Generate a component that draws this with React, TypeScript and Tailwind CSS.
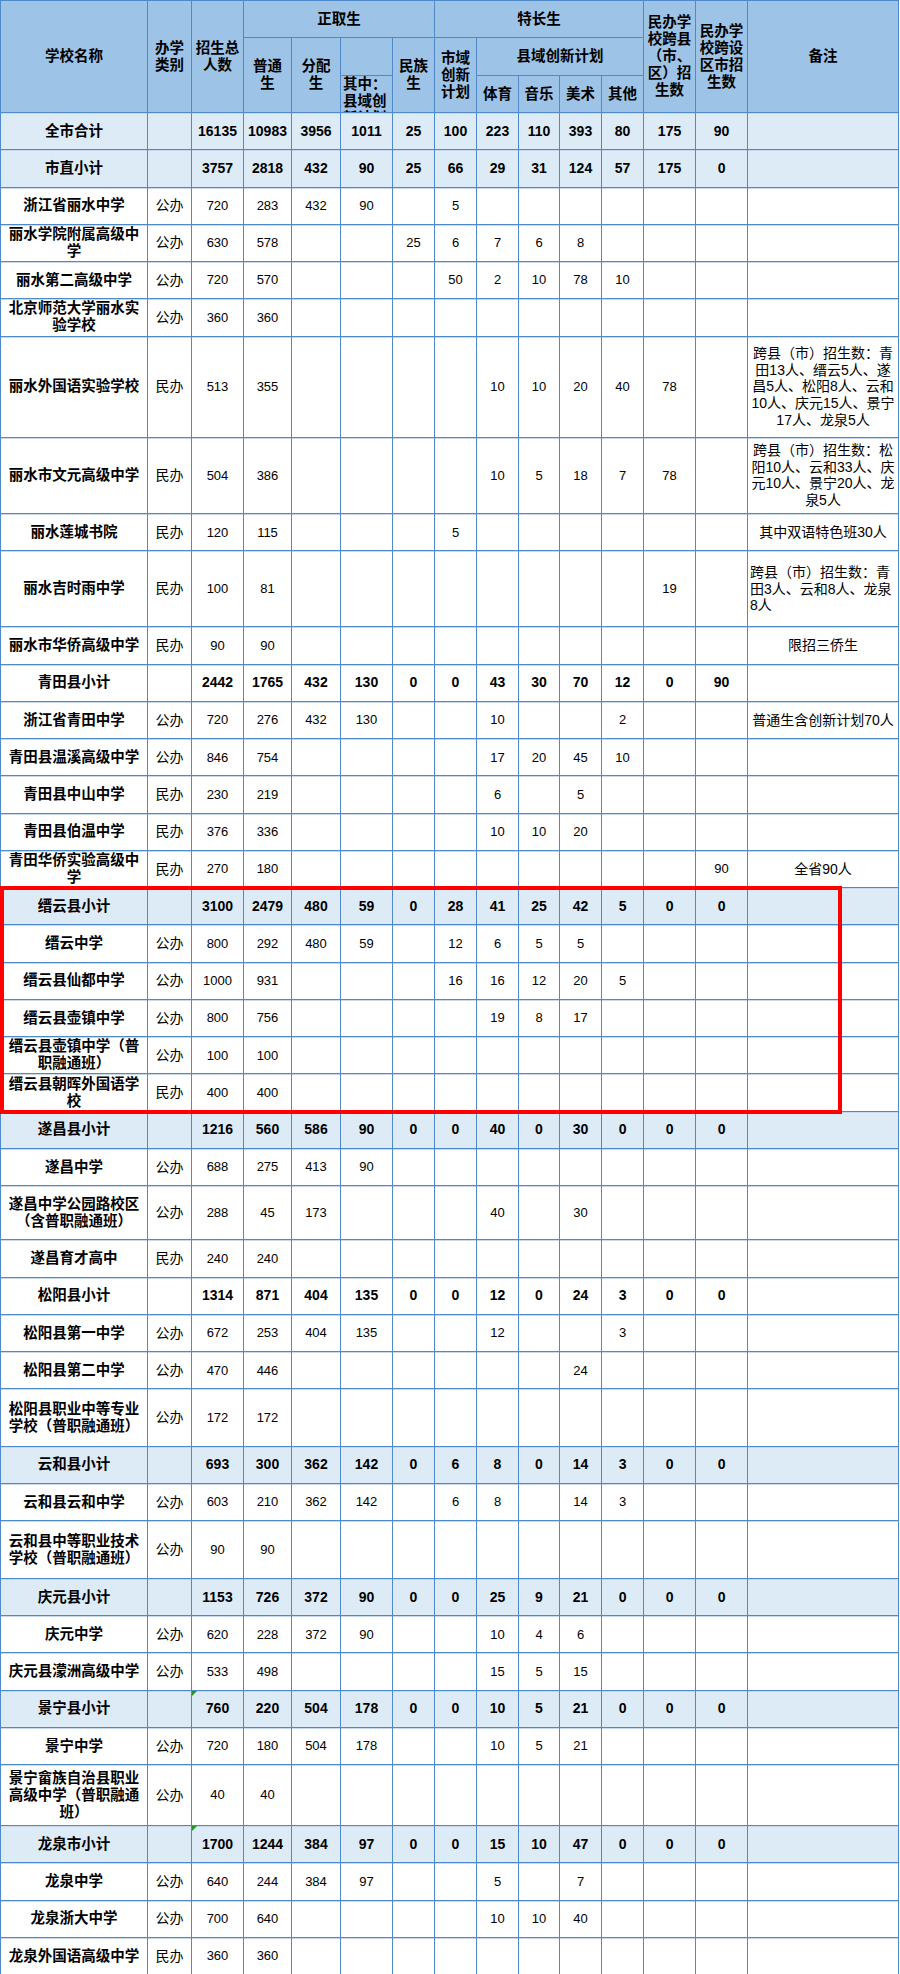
import React from "react";

type Row = {
  name: string;
  type?: string;
  vals: string[];
  remark?: string;
  sub?: boolean;
  blue?: boolean;
  h?: string;
  left?: boolean;
  tri?: boolean;
};

const v = (s: string) => s.split(",");

const rows: Row[] = [
  { name: "全市合计", vals: v("16135,10983,3956,1011,25,100,223,110,393,80,175,90"), sub: true, blue: true },
  { name: "市直小计", vals: v("3757,2818,432,90,25,66,29,31,124,57,175,0"), sub: true, blue: true },
  { name: "浙江省丽水中学", type: "公办", vals: v("720,283,432,90,,5,,,,,,") },
  { name: "丽水学院附属高级中学", type: "公办", vals: v("630,578,,,25,6,7,6,8,,,") },
  { name: "丽水第二高级中学", type: "公办", vals: v("720,570,,,,50,2,10,78,10,,") },
  { name: "北京师范大学丽水实验学校", type: "公办", vals: v("360,360,,,,,,,,,,") },
  {
    name: "丽水外国语实验学校",
    type: "民办",
    vals: v("513,355,,,,,10,10,20,40,78,"),
    remark: "跨县（市）招生数：青田13人、缙云5人、遂昌5人、松阳8人、云和10人、庆元15人、景宁17人、龙泉5人",
    h: "h-[101.33px]",
  },
  {
    name: "丽水市文元高级中学",
    type: "民办",
    vals: v("504,386,,,,,10,5,18,7,78,"),
    remark: "跨县（市）招生数：松阳10人、云和33人、庆元10人、景宁20人、龙泉5人",
    h: "h-[76.33px]",
  },
  { name: "丽水莲城书院", type: "民办", vals: v("120,115,,,,5,,,,,,"), remark: "其中双语特色班30人" },
  {
    name: "丽水吉时雨中学",
    type: "民办",
    vals: v("100,81,,,,,,,,,19,"),
    remark: "跨县（市）招生数：青田3人、云和8人、龙泉8人",
    h: "h-[76px]",
    left: true,
  },
  { name: "丽水市华侨高级中学", type: "民办", vals: v("90,90,,,,,,,,,,"), remark: "限招三侨生" },
  { name: "青田县小计", vals: v("2442,1765,432,130,0,0,43,30,70,12,0,90"), sub: true },
  { name: "浙江省青田中学", type: "公办", vals: v("720,276,432,130,,,10,,,2,,"), remark: "普通生含创新计划70人" },
  { name: "青田县温溪高级中学", type: "公办", vals: v("846,754,,,,,17,20,45,10,,") },
  { name: "青田县中山中学", type: "民办", vals: v("230,219,,,,,6,,5,,,") },
  { name: "青田县伯温中学", type: "民办", vals: v("376,336,,,,,10,10,20,,,") },
  { name: "青田华侨实验高级中学", type: "民办", vals: v("270,180,,,,,,,,,,90"), remark: "全省90人" },
  { name: "缙云县小计", vals: v("3100,2479,480,59,0,28,41,25,42,5,0,0"), sub: true, blue: true },
  { name: "缙云中学", type: "公办", vals: v("800,292,480,59,,12,6,5,5,,,") },
  { name: "缙云县仙都中学", type: "公办", vals: v("1000,931,,,,16,16,12,20,5,,") },
  { name: "缙云县壶镇中学", type: "公办", vals: v("800,756,,,,,19,8,17,,,") },
  { name: "缙云县壶镇中学（普职融通班）", type: "公办", vals: v("100,100,,,,,,,,,,") },
  { name: "缙云县朝晖外国语学校", type: "民办", vals: v("400,400,,,,,,,,,,") },
  { name: "遂昌县小计", vals: v("1216,560,586,90,0,0,40,0,30,0,0,0"), sub: true, blue: true },
  { name: "遂昌中学", type: "公办", vals: v("688,275,413,90,,,,,,,,") },
  { name: "遂昌中学公园路校区（含普职融通班）", type: "公办", vals: v("288,45,173,,,,40,,30,,,"), h: "h-[54.33px]" },
  { name: "遂昌育才高中", type: "民办", vals: v("240,240,,,,,,,,,,") },
  { name: "松阳县小计", vals: v("1314,871,404,135,0,0,12,0,24,3,0,0"), sub: true },
  { name: "松阳县第一中学", type: "公办", vals: v("672,253,404,135,,,12,,,3,,") },
  { name: "松阳县第二中学", type: "公办", vals: v("470,446,,,,,,,24,,,") },
  { name: "松阳县职业中等专业学校（普职融通班）", type: "公办", vals: v("172,172,,,,,,,,,,"), h: "h-[57.33px]" },
  { name: "云和县小计", vals: v("693,300,362,142,0,6,8,0,14,3,0,0"), sub: true, blue: true },
  { name: "云和县云和中学", type: "公办", vals: v("603,210,362,142,,6,8,,14,3,,") },
  { name: "云和县中等职业技术学校（普职融通班）", type: "公办", vals: v("90,90,,,,,,,,,,"), h: "h-[57.67px]" },
  { name: "庆元县小计", vals: v("1153,726,372,90,0,0,25,9,21,0,0,0"), sub: true, blue: true },
  { name: "庆元中学", type: "公办", vals: v("620,228,372,90,,,10,4,6,,,") },
  { name: "庆元县濛洲高级中学", type: "公办", vals: v("533,498,,,,,15,5,15,,,") },
  { name: "景宁县小计", vals: v("760,220,504,178,0,0,10,5,21,0,0,0"), sub: true, blue: true, tri: true },
  { name: "景宁中学", type: "公办", vals: v("720,180,504,178,,,10,5,21,,,") },
  { name: "景宁畲族自治县职业高级中学（普职融通班）", type: "公办", vals: v("40,40,,,,,,,,,,"), h: "h-[61px]" },
  { name: "龙泉市小计", vals: v("1700,1244,384,97,0,0,15,10,47,0,0,0"), sub: true, blue: true, tri: true },
  { name: "龙泉中学", type: "公办", vals: v("640,244,384,97,,,5,,7,,,") },
  { name: "龙泉浙大中学", type: "公办", vals: v("700,640,,,,,10,10,40,,,") },
  { name: "龙泉外国语高级中学", type: "民办", vals: v("360,360,,,,,,,,,,") },
];

const line = "border-r border-b border-[#4f89c9]";
const th = `${line} bg-[#9dc3e6] text-center align-middle font-bold text-[14.5px] leading-[17px] p-0`;
const td = `${line} shadow-[inset_0_1px_0_#c6d9ee] text-center align-middle p-0`;

export default function App() {
  return (
    <div className="min-h-screen bg-white font-['Liberation_Sans','Noto_Sans_CJK_SC',sans-serif] text-black">
      <div className="relative w-[899px]">
        <table className="w-[899px] table-fixed border-separate border-spacing-0 border-l border-t border-[#4f89c9]">
          <colgroup>
            <col className="w-[147px]" />
            <col className="w-[44px]" />
            <col className="w-[52px]" />
            <col className="w-[48px]" />
            <col className="w-[49px]" />
            <col className="w-[52px]" />
            <col className="w-[42px]" />
            <col className="w-[42px]" />
            <col className="w-[42px]" />
            <col className="w-[41px]" />
            <col className="w-[42px]" />
            <col className="w-[42px]" />
            <col className="w-[52px]" />
            <col className="w-[52px]" />
            <col />
          </colgroup>
          <thead>
            <tr className="h-[37px]">
              <th rowSpan={3} className={th}>学校名称</th>
              <th rowSpan={3} className={th}>办学<br />类别</th>
              <th rowSpan={3} className={th}>招生总<br />人数</th>
              <th colSpan={4} className={th}>正取生</th>
              <th colSpan={5} className={th}>特长生</th>
              <th rowSpan={3} className={`${th} px-[2px]`}>民办学校跨县（市、区）招生数</th>
              <th rowSpan={3} className={`${th} px-[2px]`}>民办学校跨设区市招生数</th>
              <th rowSpan={3} className={th}>备注</th>
            </tr>
            <tr className="h-[38px]">
              <th rowSpan={2} className={th}>普通<br />生</th>
              <th rowSpan={2} className={th}>分配<br />生</th>
              <th className={th}></th>
              <th rowSpan={2} className={th}>民族<br />生</th>
              <th rowSpan={2} className={th}>市域<br />创新<br />计划</th>
              <th colSpan={4} className={th}>县域创新计划</th>
            </tr>
            <tr className="h-[37px]">
              <th className={`${th} align-top`}>
                <div className="h-[36px] overflow-hidden px-[2px] text-left">其中：县域创新计划</div>
              </th>
              <th className={th}>体育</th>
              <th className={th}>音乐</th>
              <th className={th}>美术</th>
              <th className={th}>其他</th>
            </tr>
          </thead>
          <tbody>
            {rows.map((r) => (
              <tr key={r.name} className={`${r.h ?? "h-[37.25px]"} ${r.blue ? "bg-[#ddebf7]" : "bg-white"}`}>
                <td className={`${td} px-[3px] text-[14.5px] font-bold leading-[17px]`}>{r.name}</td>
                <td className={`${td} text-[14px]`}>{r.type}</td>
                {r.vals.map((val, i) => (
                  <td
                    key={i}
                    className={`${td} relative ${r.sub ? "text-[14px] font-bold" : "text-[13px]"}`}
                  >
                    {i === 0 && r.tri ? (
                      <span className="absolute left-0 top-0 h-0 w-0 border-t-[5px] border-r-[5px] border-t-[#1f9a1f] border-r-transparent" />
                    ) : null}
                    {val}
                  </td>
                ))}
                <td className={`${td} px-[2px] text-[14px] leading-[16.7px] ${r.left ? "text-left" : "text-center"}`}>
                  {r.remark}
                </td>
              </tr>
            ))}
          </tbody>
        </table>
        {/* red highlight round the 缙云县 block */}
        <div className="pointer-events-none absolute left-0 top-[886px] h-[228px] w-[842px] border-4 border-[#ff0000]" />
      </div>
    </div>
  );
}
